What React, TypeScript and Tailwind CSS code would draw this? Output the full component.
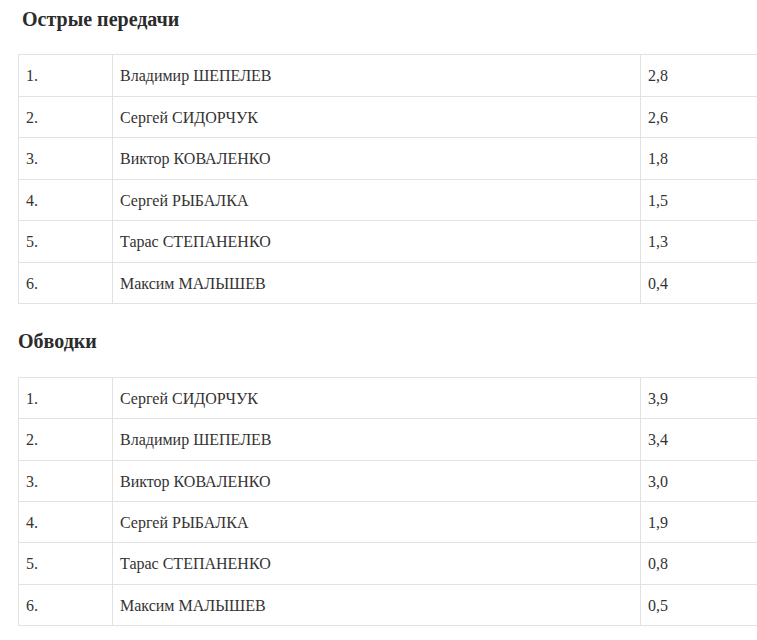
type Row = {
  place: string;
  name: string;
  value: string;
};

const sharpPasses: Row[] = [
  { place: "1.", name: "Владимир ШЕПЕЛЕВ", value: "2,8" },
  { place: "2.", name: "Сергей СИДОРЧУК", value: "2,6" },
  { place: "3.", name: "Виктор КОВАЛЕНКО", value: "1,8" },
  { place: "4.", name: "Сергей РЫБАЛКА", value: "1,5" },
  { place: "5.", name: "Тарас СТЕПАНЕНКО", value: "1,3" },
  { place: "6.", name: "Максим МАЛЫШЕВ", value: "0,4" },
];

const dribbles: Row[] = [
  { place: "1.", name: "Сергей СИДОРЧУК", value: "3,9" },
  { place: "2.", name: "Владимир ШЕПЕЛЕВ", value: "3,4" },
  { place: "3.", name: "Виктор КОВАЛЕНКО", value: "3,0" },
  { place: "4.", name: "Сергей РЫБАЛКА", value: "1,9" },
  { place: "5.", name: "Тарас СТЕПАНЕНКО", value: "0,8" },
  { place: "6.", name: "Максим МАЛЫШЕВ", value: "0,5" },
];

function StatTable({ rows, rowHeight }: { rows: Row[]; rowHeight: string }) {
  return (
    <div className="w-[760px] border-t border-l border-[#e2e2e2]">
      {rows.map((row) => (
        <div key={row.place} className={`flex border-b border-[#e2e2e2] ${rowHeight}`}>
          <div className="w-[94px] shrink-0 flex items-center pl-[7px] pt-[2px] border-r border-[#e2e2e2]">
            {row.place}
          </div>
          <div className="w-[528px] shrink-0 flex items-center pl-[7px] pt-[2px] border-r border-[#e2e2e2]">
            {row.name}
          </div>
          <div className="flex-1 flex items-center pl-[7px] pt-[2px]">{row.value}</div>
        </div>
      ))}
    </div>
  );
}

export default function App() {
  return (
    <div className="w-[757px] h-[640px] overflow-hidden bg-white pl-[18px] text-[#333333] text-[16px] font-['Liberation_Serif','Times_New_Roman',serif]">
      <h2 className="pt-[7px] pl-[4px] text-[20px] leading-[24px] font-bold text-[#2b2b2b]">
        Острые передачи
      </h2>
      <div className="mt-[23px]">
        <StatTable rows={sharpPasses} rowHeight="h-[41.5px]" />
      </div>
      <h2 className="mt-[25px] text-[20px] leading-[24px] font-bold text-[#2b2b2b]">
        Обводки
      </h2>
      <div className="mt-[24px]">
        <StatTable rows={dribbles} rowHeight="h-[41.33px]" />
      </div>
    </div>
  );
}
